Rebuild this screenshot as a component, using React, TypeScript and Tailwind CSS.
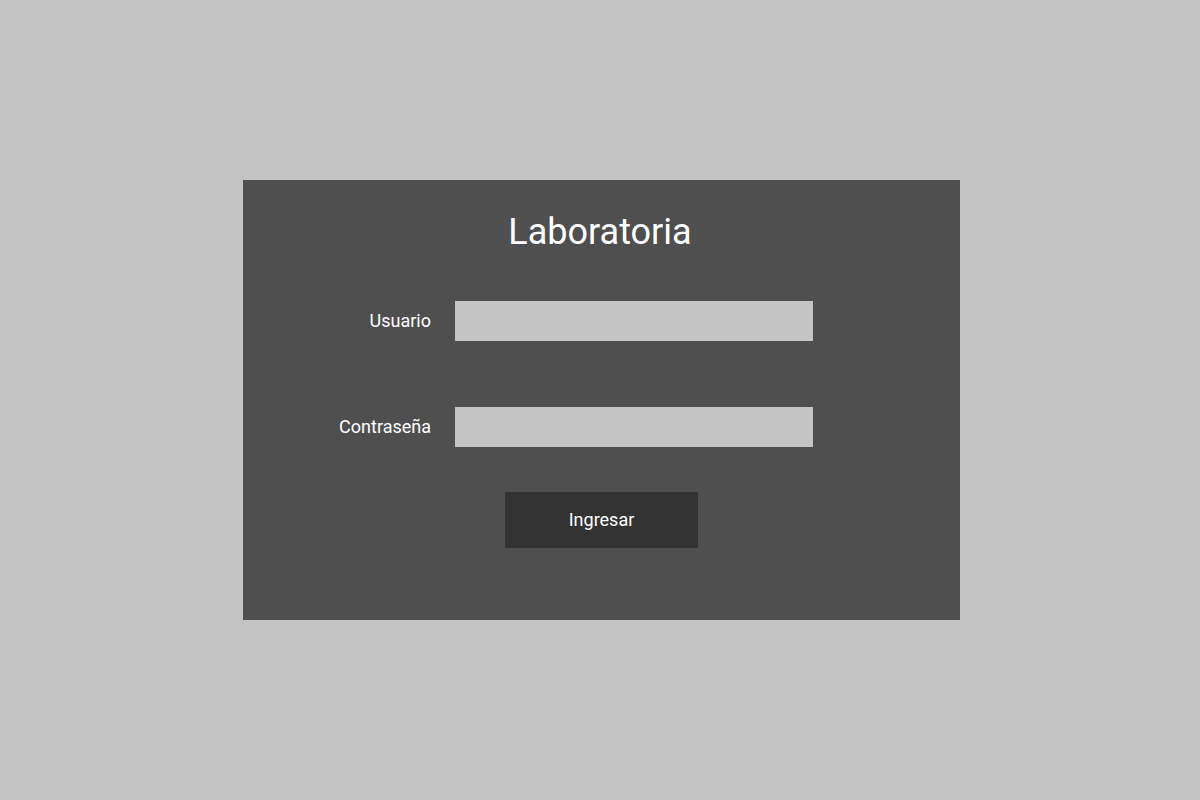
import React from 'react';

const App: React.FC = () => {
  return (
    <div className="w-[1200px] h-[800px] bg-[#c4c4c4] pt-[180px] pl-[243px]" style={{ fontFamily: 'Roboto, "Noto Sans", sans-serif' }}>
      <div className="w-[717px] h-[440px] bg-[#4f4f4f] flex flex-col pt-[31px]">
        <h1 className="text-[36px] leading-[42px] text-white text-center pr-[3px]">Laboratoria</h1>
        <form className="flex flex-col mt-[48px]" onSubmit={(e) => e.preventDefault()}>
          <div className="flex items-center">
            <label className="w-[212px] pr-[24px] pb-[2px] text-right text-[18px] text-white">Usuario</label>
            <input type="text" className="w-[358px] h-10 bg-[#c4c4c4] outline-none" />
          </div>
          <div className="flex items-center mt-[66px]">
            <label className="w-[212px] pr-[24px] pb-[2px] text-right text-[18px] text-white">Contraseña</label>
            <input type="password" className="w-[358px] h-10 bg-[#c4c4c4] outline-none" />
          </div>
          <button type="submit" className="ml-[262px] mt-[45px] w-[193px] h-[56px] pb-[2px] bg-[#333333] text-white text-[18px]">
            Ingresar
          </button>
        </form>
      </div>
    </div>
  );
};

export default App;
